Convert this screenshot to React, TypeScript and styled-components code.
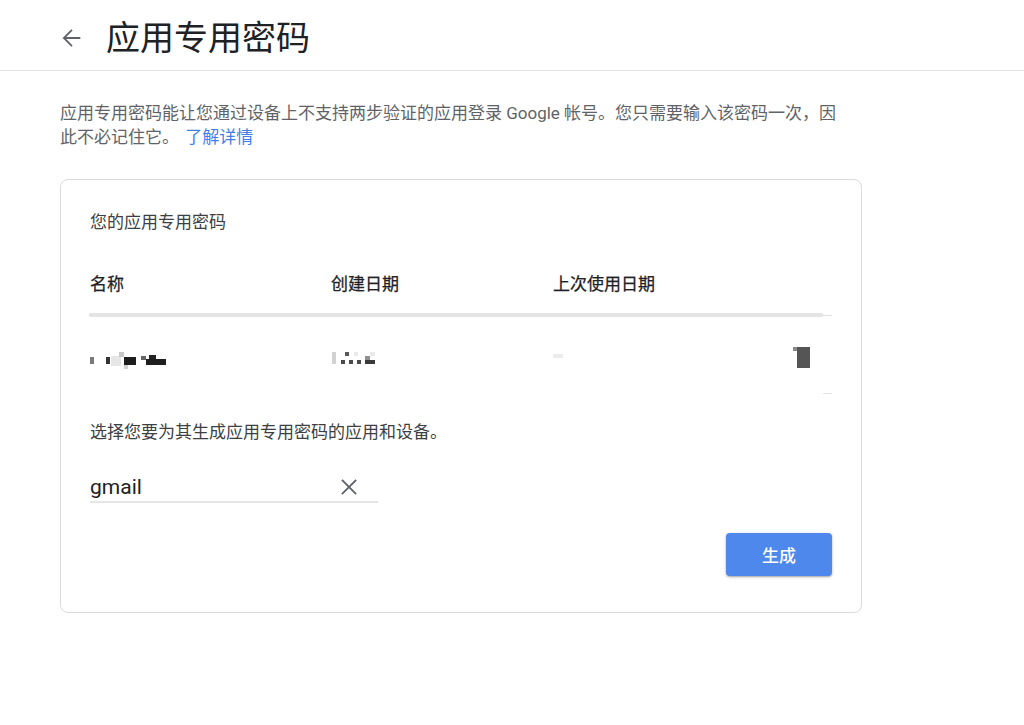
import React from "react";
import styled, { createGlobalStyle } from "styled-components";

const GlobalStyle = createGlobalStyle`
  html, body { margin: 0; padding: 0; background: #ffffff; }
  body { font-family: "Roboto", "Noto Sans CJK SC", sans-serif; color: #3c4043; }
  * { box-sizing: border-box; }
`;

const Page = styled.div`
  width: 1024px;
  min-height: 725px;
  background: #fff;
`;

const Header = styled.header`
  height: 71px;
  display: flex;
  align-items: center;
  padding-left: 57px;
  padding-top: 5px;
  border-bottom: 1px solid #e3e3e3;
  gap: 21px;
`;

const BackButton = styled.button`
  border: 0;
  background: none;
  padding: 0;
  width: 28px;
  height: 28px;
  display: flex;
  cursor: pointer;
  color: #5f6368;
`;

const Title = styled.h1`
  margin: 0;
  font-size: 34px;
  font-weight: 400;
  line-height: 40px;
  color: #202124;
  letter-spacing: 0;
`;

const Content = styled.main`
  padding: 30px 0 0 60px;
`;

const Intro = styled.p`
  margin: 0;
  max-width: 792px;
  font-size: 17px;
  line-height: 24px;
  color: #5f6368;
`;

const Link = styled.a`
  color: #3f7fe6;
  text-decoration: none;
  margin-left: 2px;
`;

const Card = styled.section`
  margin-top: 30px;
  width: 802px;
  border: 1px solid #dadce0;
  border-radius: 8px;
  padding: 30px 29px 36px 29px;
`;

const CardTitle = styled.h2`
  margin: 0;
  font-size: 17px;
  font-weight: 400;
  line-height: 24px;
  color: #3c4043;
`;

const TableRow = styled.div<{ $head?: boolean }>`
  display: grid;
  grid-template-columns: 241px 222px 1fr;
  align-items: start;
  margin-top: ${(p) => (p.$head ? "38px" : "0")};
  height: ${(p) => (p.$head ? "24px" : "76px")};
  padding-top: ${(p) => (p.$head ? "0" : "28px")};
`;

const HeadCell = styled.div`
  font-size: 17px;
  line-height: 24px;
  font-weight: 400;
  color: #202124;
  -webkit-text-stroke: 0.25px #202124;
`;

const BarRow = styled.div`
  margin-top: 17px;
  margin-left: -1px;
  display: flex;
  align-items: center;
  height: 4px;
`;

const Bar = styled.div`
  flex: 1;
  height: 4px;
  background: #e4e4e4;
  border-radius: 1px;
`;

const BarTail = styled.div`
  width: 9px;
  height: 1px;
  background: #e0e0e0;
`;

const LastCell = styled.div`
  display: flex;
  justify-content: space-between;
  align-items: flex-start;
  padding-right: 22px;
`;

const RowTail = styled.div`
  margin-left: auto;
  width: 9px;
  height: 1px;
  background: #e3e3e3;
`;

const Prompt = styled.p`
  margin: 26px 0 0;
  font-size: 17px;
  line-height: 24px;
  color: #3c4043;
`;

const Field = styled.div`
  margin-top: 28px;
  width: 288px;
  height: 31px;
  display: flex;
  align-items: center;
  border-bottom: 2px solid #e6e6e6;
`;

const Input = styled.input`
  flex: 1;
  min-width: 0;
  border: 0;
  outline: none;
  padding: 0;
  font-family: "Roboto", "Noto Sans CJK SC", sans-serif;
  font-size: 21px;
  line-height: 28px;
  color: #202124;
  background: transparent;
`;

const ClearButton = styled.button`
  border: 0;
  background: none;
  padding: 0;
  margin-right: 21px;
  width: 16px;
  height: 16px;
  display: flex;
  color: #5f6368;
  cursor: pointer;
`;

const Actions = styled.div`
  margin-top: 30px;
  display: flex;
  justify-content: flex-end;
`;

const PrimaryButton = styled.button`
  width: 106px;
  height: 43px;
  border: 0;
  border-radius: 4px;
  background: #4e88ec;
  color: #ffffff;
  font-family: "Roboto", "Noto Sans CJK SC", sans-serif;
  font-size: 17px;
  font-weight: 500;
  box-shadow: 0 1px 3px rgba(0, 0, 0, 0.3), 0 1px 1px rgba(0, 0, 0, 0.1);
  cursor: pointer;
`;

type Px = [number, number, number, number, string];

const Pixelated: React.FC<{ w: number; px: Px[] }> = ({ w, px }) => (
  <svg width={w} height={24} viewBox={`0 0 ${w} 24`} aria-hidden>
    {px.map(([x, y, ww, hh, c], i) => (
      <rect key={i} x={x} y={y} width={ww} height={hh} fill={c} />
    ))}
  </svg>
);

const namePx: Px[] = [
  [0, 12, 4, 7, "#7a7a7a"],
  [16, 12, 4, 7, "#333"],
  [21, 11, 10, 10, "#e6e6e6"],
  [29, 7, 5, 5, "#c8c8c8"],
  [34, 12, 12, 8, "#1e1e1e"],
  [34, 20, 4, 4, "#d4d4d4"],
  [51, 11, 5, 4, "#666"],
  [59, 10, 7, 4, "#222"],
  [56, 14, 20, 6, "#1e1e1e"],
];

const datePx: Px[] = [
  [1, 7, 4, 12, "#d2d2d2"],
  [14, 7, 4, 4, "#5a5a5a"],
  [23, 7, 4, 4, "#eaeaea"],
  [10, 15, 4, 4, "#4a4a4a"],
  [18, 15, 4, 4, "#4a4a4a"],
  [26, 15, 4, 4, "#4a4a4a"],
  [34, 11, 5, 4, "#909090"],
  [34, 15, 10, 4, "#3a3a3a"],
  [39, 7, 5, 4, "#eaeaea"],
];

const usedPx: Px[] = [[0, 9, 10, 4, "#ececec"]];

const RedactedIcon = () => (
  <svg width={17} height={24} viewBox="0 0 17 24" aria-hidden>
    <rect x={0} y={2} width={5} height={4} fill="#8a8a8a" />
    <rect x={4} y={2} width={13} height={21} fill="#555555" />
  </svg>
);

export default function App() {
  return (
    <Page>
      <GlobalStyle />
      <Header>
        <BackButton aria-label="返回">
          <svg width="28" height="28" viewBox="0 0 24 24" fill="currentColor">
            <path d="M20 11.1H7.9l5.5-5.5-1.1-1.1L4.8 12l7.5 7.5 1.1-1.1-5.5-5.5H20z" />
          </svg>
        </BackButton>
        <Title>应用专用密码</Title>
      </Header>
      <Content>
        <Intro>
          应用专用密码能让您通过设备上不支持两步验证的应用登录 Google 帐号。您只需要输入该密码一次，因此不必记住它。{" "}
          <Link href="#">了解详情</Link>
        </Intro>
        <Card>
          <CardTitle>您的应用专用密码</CardTitle>
          <TableRow $head>
            <HeadCell>名称</HeadCell>
            <HeadCell>创建日期</HeadCell>
            <HeadCell>上次使用日期</HeadCell>
          </TableRow>
          <BarRow>
            <Bar />
            <BarTail />
          </BarRow>
          <TableRow>
            <Pixelated w={80} px={namePx} />
            <Pixelated w={46} px={datePx} />
            <LastCell>
              <Pixelated w={12} px={usedPx} />
              <RedactedIcon />
            </LastCell>
          </TableRow>
          <RowTail />
          <Prompt>选择您要为其生成应用专用密码的应用和设备。</Prompt>
          <Field>
            <Input defaultValue="gmail" aria-label="应用名称" />
            <ClearButton aria-label="清除">
              <svg width="16" height="16" viewBox="0 0 16 16" stroke="currentColor" strokeWidth="1.8" strokeLinecap="square">
                <line x1="1.5" y1="1.5" x2="14.5" y2="14.5" />
                <line x1="14.5" y1="1.5" x2="1.5" y2="14.5" />
              </svg>
            </ClearButton>
          </Field>
          <Actions>
            <PrimaryButton>生成</PrimaryButton>
          </Actions>
        </Card>
      </Content>
    </Page>
  );
}
